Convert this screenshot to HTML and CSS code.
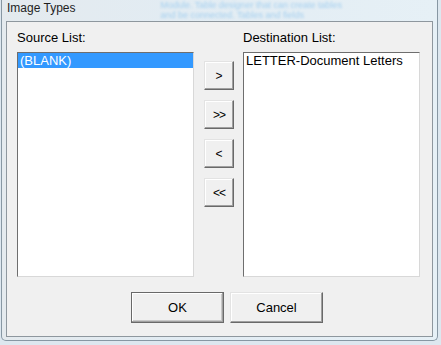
FILE: index.html
```html
<!DOCTYPE html>
<html lang="en">

<head>
    <meta charset="utf-8">
    <title>Image Types</title>
    <link rel="stylesheet" href="styles.css">
</head>

<body>

    <div class="frame">
        <div class="titlebar">
            <span class="title">Image Types</span>
            <span class="ghost">Module. Table designer that can create tables<br>and be connected. Tables and fields</span>
        </div>

        <div class="dialog">
            <div class="lists">
                <div class="col">
                    <div class="label">Source List:</div>
                    <div class="listbox">
                        <div class="item valgt">(BLANK)</div>
                    </div>
                </div>

                <div class="movers">
                    <button class="knap">&gt;</button>
                    <button class="knap dbl">&gt;&gt;</button>
                    <button class="knap">&lt;</button>
                    <button class="knap dbl">&lt;&lt;</button>
                </div>

                <div class="col">
                    <div class="label">Destination List:</div>
                    <div class="listbox">
                        <div class="item">LETTER-Document Letters</div>
                    </div>
                </div>
            </div>

            <div class="actions">
                <button class="stor default">OK</button>
                <button class="stor">Cancel</button>
            </div>
        </div>
    </div>

</body>

</html>
```

FILE: styles.css
```css
body {
    margin: 0;
    padding: 0;
    background-color: #dde7ef;
    font-family: "Liberation Sans", Arial, sans-serif;
    font-size: 13px;
    color: black;
}

/*ramme og titel*/

.frame {
    width: 435px;
    height: 340px;
    margin-left: 1px;
    border: 1px solid #8797a3;
    border-top: none;
    border-radius: 0 0 5px 5px;
    background: linear-gradient(to right, #e4eaee, #e2ecf3 40%, #e6f0f6);
    overflow: hidden;
}

.titlebar {
    display: flex;
    height: 21px;
    padding-left: 5px;
    overflow: hidden;
}

.title {
    font-size: 12px;
    line-height: 17px;
    color: #1e1e1e;
}

.ghost {
    margin-left: 85px;
    font-size: 9px;
    line-height: 10px;
    color: #a6d0ef;
    filter: blur(1.2px);
    white-space: nowrap;
}

.dialog {
    box-sizing: border-box;
    width: 427px;
    height: 316px;
    margin: 0 4px;
    border: 1px solid #8e979e;
    background-color: #f0f0f0;
    padding-top: 8px;
}

/*listerne*/

.lists {
    display: flex;
    padding-left: 10px;
}

.label {
    line-height: 16px;
    margin-bottom: 6px;
}

.listbox {
    box-sizing: border-box;
    width: 177px;
    height: 225px;
    background-color: white;
    border: 1px solid;
    border-color: #6e6e6e #d8d8d8 #d8d8d8 #6e6e6e;
}

.item {
    line-height: 15px;
    padding-left: 2px;
}

.valgt {
    background-color: #3399ff;
    color: white;
}

/*knapper*/

.movers {
    display: flex;
    flex-direction: column;
    gap: 10px;
    padding-top: 31px;
    margin: 0 9px 0 10px;
}

button {
    font-family: "Liberation Sans", Arial, sans-serif;
    background-color: #f0f0f0;
    border: 1px solid;
    border-color: #e3e3e3 #696969 #696969 #e3e3e3;
    box-shadow: inset -1px -1px #a0a0a0, inset 1px 1px #ffffff;
    padding: 0;
    color: black;
}

.knap {
    width: 30px;
    height: 29px;
    font-size: 12px;
}

.dbl {
    letter-spacing: -1px;
}

.actions {
    display: flex;
    gap: 6px;
    padding-left: 124px;
    margin-top: 15px;
}

.stor {
    width: 93px;
    height: 31px;
    font-size: 13px;
}

.default {
    border-color: #696969;
    box-shadow: inset -1px -1px #a0a0a0, inset 1px 1px #ffffff, inset -2px -2px #c8c8c8;
}
```
